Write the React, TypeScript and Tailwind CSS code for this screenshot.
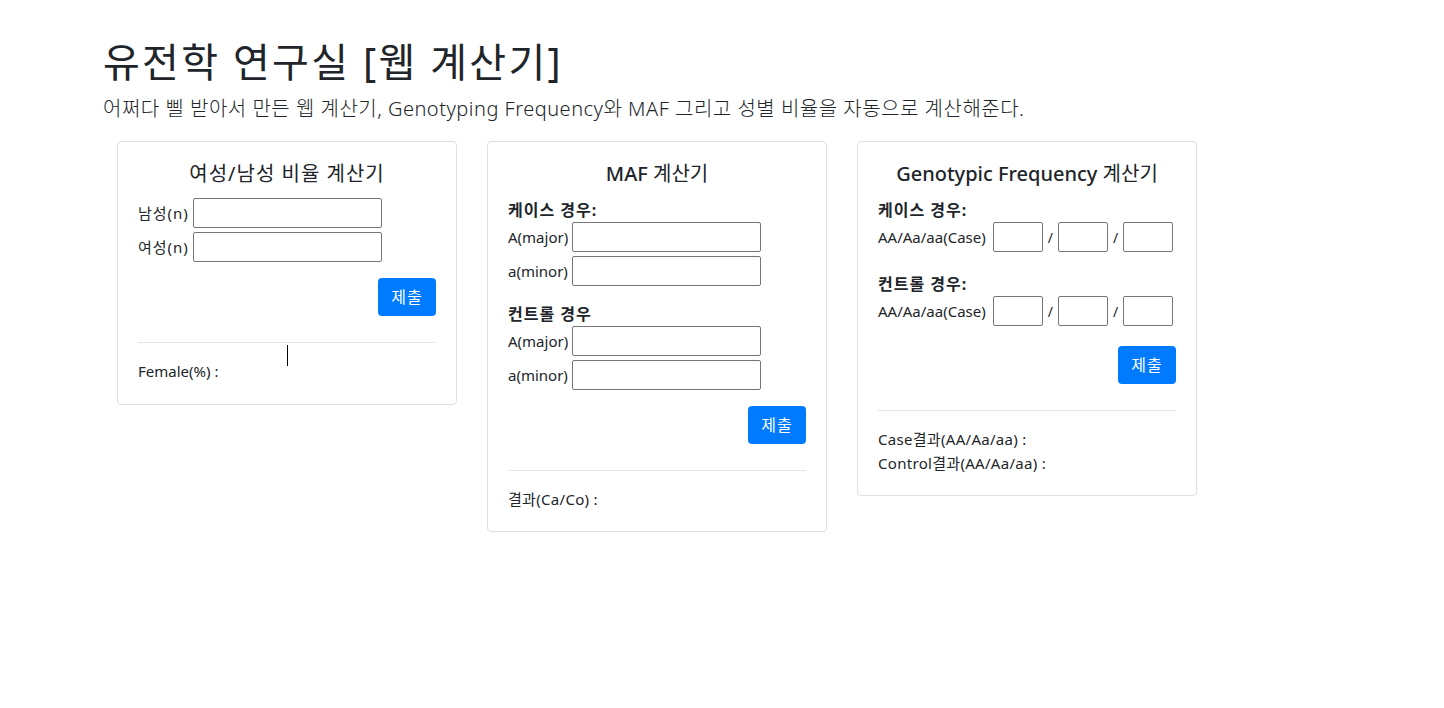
const font = { fontFamily: '"Noto Sans", "Noto Sans CJK KR", sans-serif' };

const Field = ({ w = "w-[189px]" }: { w?: string }) => (
  <input type="text" className={`${w} h-[30px] border border-[#767676] rounded-[2px] bg-white`} />
);

const Row = ({ label, wide = false }: { label: string; wide?: boolean }) => (
  <div className="flex items-center gap-[4px] h-[30px]">
    <span className={wide ? "text-[15px] tracking-[1px]" : "text-[15px]"}>{label}</span>
    <Field />
  </div>
);

const GenoRow = () => (
  <div className="flex items-center gap-[5px] h-[30px]">
    <span className="text-[15px] mr-[2px]">AA/Aa/aa(Case)</span>
    <Field w="w-[50px]" />
    <span className="text-[14px]">/</span>
    <Field w="w-[50px]" />
    <span className="text-[14px]">/</span>
    <Field w="w-[50px]" />
  </div>
);

const Submit = ({ top = "mt-[16px]" }: { top?: string }) => (
  <div className={`flex justify-end ${top}`}>
    <button className="bg-[#007bff] text-white rounded-[4px] w-[58px] h-[38px] text-[16px] tracking-[1px]">제출</button>
  </div>
);

const Divider = () => <hr className="mt-[26px] mb-[16px] border-0 border-t border-[#e6e6e6]" />;

const Card = ({ children }: { children: React.ReactNode }) => (
  <div className="w-[340px] border border-[#dfdfdf] rounded-[4px] p-[20px]">{children}</div>
);

const Title = ({ children }: { children: React.ReactNode }) => (
  <h5 className="text-center text-[20px] leading-[24px] mb-[12px]">{children}</h5>
);

const Head = ({ children, top = "" }: { children: React.ReactNode; top?: string }) => (
  <div className={`font-bold text-[16px] leading-[24px] tracking-[1px] ${top}`}>{children}</div>
);

export default function App() {
  return (
    <div className="min-h-screen bg-white text-[#212529]" style={font}>
      <div className="pt-[38px] pl-[103px]">
        <h1 className="text-[40px] leading-[48px] font-normal tracking-[2.3px]">유전학 연구실 [웹 계산기]</h1>
        <p className="text-[20px] leading-[30px] font-light mt-[8px] tracking-[0.5px]">
          어쩌다 삘 받아서 만든 웹 계산기, Genotyping Frequency와 MAF 그리고 성별 비율을 자동으로 계산해준다.
        </p>
        <div className="flex items-start gap-[30px] ml-[14px] mt-[17px]">
          <Card>
            <Title>
              <span className="tracking-[1px]">여성/남성 비율 계산기</span>
            </Title>
            <div className="space-y-[4px]">
              <Row label="남성(n)" wide />
              <Row label="여성(n)" wide />
            </div>
            <Submit />
            <Divider />
            <div className="relative text-[15px] leading-[24px] mb-[1px]">
              Female(%) :
              <span className="absolute left-[149px] top-[-14px] w-px h-[21px] bg-black" />
            </div>
          </Card>

          <Card>
            <Title>
              <span className="font-medium">MAF</span> 계산기
            </Title>
            <Head>케이스 경우:</Head>
            <div className="space-y-[4px]">
              <Row label="A(major)" />
              <Row label="a(minor)" />
            </div>
            <Head top="mt-[16px]">컨트롤 경우</Head>
            <div className="space-y-[4px]">
              <Row label="A(major)" />
              <Row label="a(minor)" />
            </div>
            <Submit />
            <Divider />
            <div className="text-[15px] leading-[24px] tracking-[0.3px]">결과(Ca/Co) :</div>
          </Card>

          <Card>
            <Title>
              <span className="font-medium">Genotypic Frequency</span> 계산기
            </Title>
            <Head>케이스 경우:</Head>
            <GenoRow />
            <Head top="mt-[20px]">컨트롤 경우:</Head>
            <GenoRow />
            <Submit top="mt-[20px]" />
            <Divider />
            <div className="text-[15px] leading-[24px] tracking-[0.3px]">Case결과(AA/Aa/aa) :</div>
            <div className="text-[15px] leading-[24px] tracking-[0.3px]">Control결과(AA/Aa/aa) :</div>
          </Card>
        </div>
      </div>
    </div>
  );
}
